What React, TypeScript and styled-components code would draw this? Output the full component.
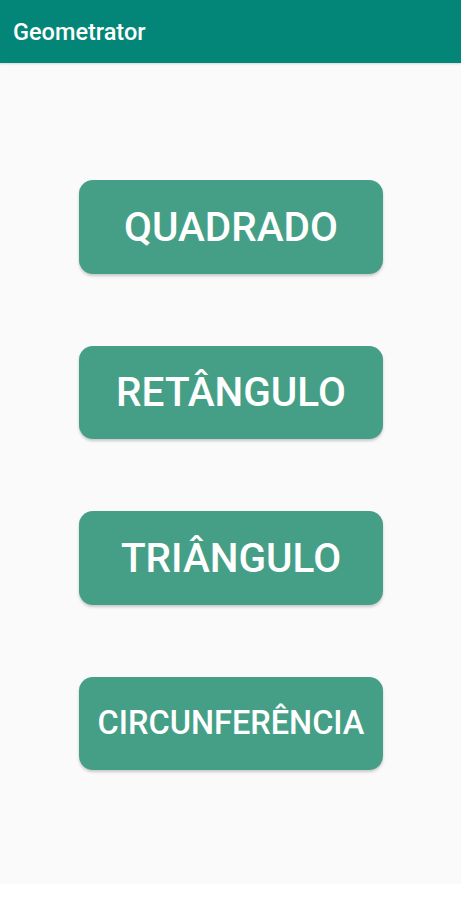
import React from "react";
import styled, { createGlobalStyle } from "styled-components";

const GlobalStyle = createGlobalStyle`
  body {
    margin: 0;
    background: #ffffff;
    font-family: Roboto, "Liberation Sans", sans-serif;
  }
`;

const shapes = [
  { label: "QUADRADO", size: 40.5 },
  { label: "RETÂNGULO", size: 40.5 },
  { label: "TRIÂNGULO", size: 40.5 },
  { label: "CIRCUNFERÊNCIA", size: 32.5 },
];

const App = () => {
  return (
    <Screen>
      <GlobalStyle />
      <TopBar>
        <Title>Geometrator</Title>
      </TopBar>
      <Content>
        {shapes.map((s) => (
          <ShapeButton key={s.label} $size={s.size}>
            {s.label}
          </ShapeButton>
        ))}
      </Content>
    </Screen>
  );
};

export default App;

const Screen = styled.div`
  display: flex;
  flex-direction: column;
  width: 461px;
`;

const TopBar = styled.header`
  height: 63px;
  background-color: #038677;
  display: flex;
  align-items: center;
  padding-left: 13px;
  box-shadow: 0 1px 2px rgba(0, 0, 0, 0.15);
  position: relative;
  z-index: 1;
`;

const Title = styled.h1`
  margin: 0;
  color: #ffffff;
  font-size: 23.5px;
  font-weight: 500;
  letter-spacing: 0;
`;

const Content = styled.main`
  height: 821px;
  background-color: #fafafa;
  display: flex;
  flex-direction: column;
  align-items: center;
  gap: 72px;
  padding-top: 117px;
  box-sizing: border-box;
`;

const ShapeButton = styled.button<{ $size: number }>`
  width: 304px;
  height: 93.5px;
  margin-left: 1px;
  border: none;
  border-radius: 14px;
  background-color: #459f86;
  color: #ffffff;
  font-family: Roboto, "Liberation Sans", sans-serif;
  font-size: ${(p) => p.$size}px;
  font-weight: 500;
  box-shadow: 0 2px 3px rgba(0, 0, 0, 0.2);
  cursor: pointer;
  padding: 0;
`;
